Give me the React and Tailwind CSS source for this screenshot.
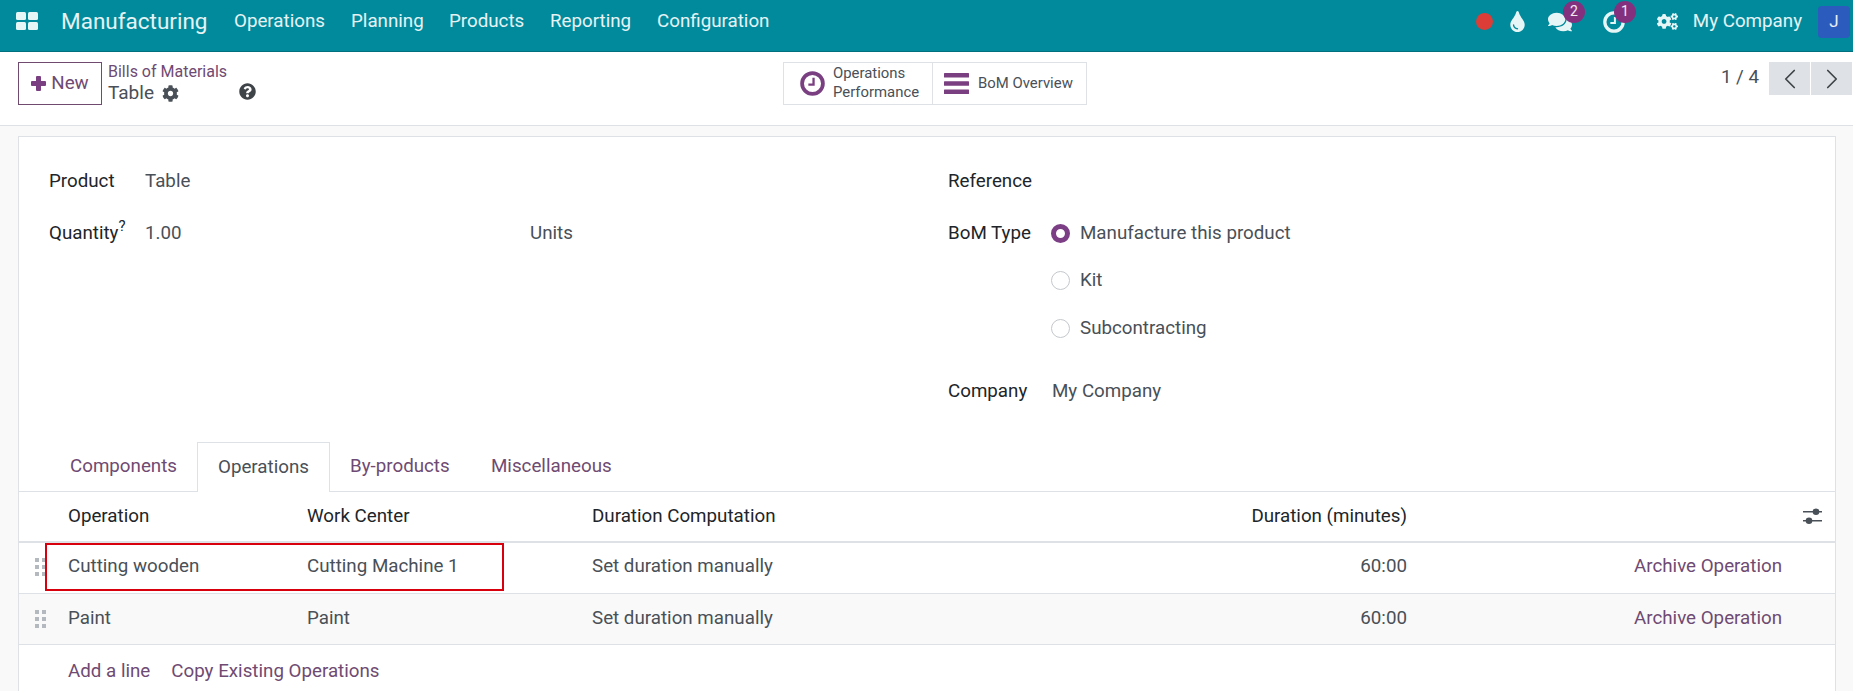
import React from 'react';
import { FaCog, FaQuestionCircle, FaTint, FaComments, FaCogs } from 'react-icons/fa';
import { ChevronLeft, ChevronRight } from 'lucide-react';

const menus = [
  { label: 'Operations', className: 'w-[117px]' },
  { label: 'Planning', className: 'w-[98px]' },
  { label: 'Products', className: 'w-[101px]' },
  { label: 'Reporting', className: 'w-[107px]' },
  { label: 'Configuration', className: 'w-[114px]' },
];

const operations = [
  { name: 'Cutting wooden', center: 'Cutting Machine 1', rowClass: 'pb-[3px] bg-white' },
  { name: 'Paint', center: 'Paint', rowClass: 'pb-[1px] bg-[#f9f9f9]' },
];

const tableCols = 'grid grid-cols-[49px_239px_285px_410px_405px_375px_53px] items-center';

function AppsIcon() {
  return (
    <svg width="22" height="18" viewBox="0 0 22 18" fill="currentColor">
      <rect x="0" y="0" width="10" height="8" rx="1.5" />
      <rect x="12" y="0" width="10" height="8" rx="1.5" />
      <rect x="0" y="10" width="10" height="8" rx="1.5" />
      <rect x="12" y="10" width="10" height="8" rx="1.5" />
    </svg>
  );
}

function PlusIcon() {
  return (
    <svg width="15" height="15" viewBox="0 0 15 15" fill="#7a3f80">
      <rect x="5" y="0" width="5" height="15" rx="1" />
      <rect x="0" y="5" width="15" height="5" rx="1" />
    </svg>
  );
}

function ClockIcon({ size }) {
  return (
    <svg width={size} height={size} viewBox="0 0 24 24" fill="none" stroke="currentColor">
      <circle cx="12" cy="12" r="10" strokeWidth="3.6" />
      <path d="M13 6.5V13H8" strokeWidth="2.2" />
    </svg>
  );
}

function BarsIcon() {
  return (
    <svg width="25" height="21" viewBox="0 0 25 21" fill="currentColor">
      <rect x="0" y="0" width="25" height="4.5" rx="0.5" />
      <rect x="0" y="8.2" width="25" height="4.5" rx="0.5" />
      <rect x="0" y="16.5" width="25" height="4.5" rx="0.5" />
    </svg>
  );
}

function DragHandle() {
  return (
    <svg width="11" height="18" viewBox="0 0 11 18" fill="#b4b9bf">
      <rect x="0" y="0" width="4" height="4" />
      <rect x="7" y="0" width="4" height="4" />
      <rect x="0" y="7" width="4" height="4" />
      <rect x="7" y="7" width="4" height="4" />
      <rect x="0" y="14" width="4" height="4" />
      <rect x="7" y="14" width="4" height="4" />
    </svg>
  );
}

function SlidersIcon() {
  return (
    <svg width="19" height="17" viewBox="0 0 19 17" fill="#495057">
      <rect x="0" y="3" width="19" height="1.5" />
      <rect x="0" y="12" width="19" height="1.5" />
      <circle cx="13" cy="3.7" r="3.3" />
      <circle cx="6" cy="12.7" r="3.3" />
    </svg>
  );
}

function Radio({ checked, label }) {
  return (
    <div className="flex items-center h-[34px] ml-[-1px] text-[#495057]">
      {checked ? (
        <span className="w-[19px] h-[19px] rounded-full border-[5px] border-[#7c3f86] bg-white" />
      ) : (
        <span className="w-[19px] h-[19px] rounded-full border border-[#c4c8cc] bg-white" />
      )}
      <span className="ml-[10px]">{label}</span>
    </div>
  );
}

function Badge({ children, className }) {
  return (
    <span className={`absolute flex items-center justify-center w-[22px] h-[22px] rounded-full bg-[#83317f] text-white/90 text-[14px] ${className}`}>
      {children}
    </span>
  );
}

export default function App() {
  return (
    <div className="h-screen overflow-hidden flex flex-col bg-[#f9f9f9] font-['Roboto',sans-serif] text-[18.75px] text-[#495057]">
      <nav className="h-[52px] shrink-0 flex items-center pb-[8px] bg-[#008a9b] border-b border-[#00707e] text-white/90">
        <div className="ml-4 mb-[1px] text-[#e6f5f6]">
          <AppsIcon />
        </div>
        <span className="ml-[23px] w-[173px] text-[22.5px]">Manufacturing</span>
        <div className="flex">
          {menus.map((m) => (
            <span key={m.label} className={m.className}>{m.label}</span>
          ))}
        </div>
        <div className="ml-auto flex items-center">
          <span className="w-[17px] h-[17px] rounded-full bg-[#dc3d36]" />
          <FaTint className="ml-[14px] text-[21px] text-[#e6f5f6]" />
          <div className="relative ml-[20px] w-[26px]">
            <FaComments className="text-[24px] text-[#e6f5f6]" />
            <Badge className="-top-[9px] left-[15px]">2</Badge>
          </div>
          <div className="relative ml-[29px] w-[22px] text-[#e6f5f6]">
            <ClockIcon size={22} />
            <Badge className="-top-[10px] left-[11px]">1</Badge>
          </div>
          <FaCogs className="ml-[32px] text-[21px] text-[#e6f5f6]" />
          <span className="ml-[15px]">My Company</span>
          <span className="ml-[16px] mr-[3px] mt-[1px] w-8 h-8 rounded flex items-center justify-center bg-[#2a5bbd] text-[17px]">J</span>
        </div>
      </nav>

      <div className="h-[74px] shrink-0 flex items-start bg-white border-b border-[#dee2e6] pl-[18px] pt-[10px]">
        <div className="w-[765px] flex items-start">
          <button className="h-[43px] w-[84px] flex items-center justify-center gap-[5px] border border-[#714b6f] text-[#6f4a72]">
            <PlusIcon />
            New
          </button>
          <div className="ml-[6px] flex flex-col">
            <span className="text-[16px] leading-[20px] text-[#6f4a72]">Bills of Materials</span>
            <div className="flex items-center h-[22px]">
              <span className="text-[19px]">Table</span>
              <FaCog className="ml-[8px] text-[17px]" />
              <FaQuestionCircle className="ml-[60px] mb-[3px] text-[17px] text-[#3f4449]" />
            </div>
          </div>
        </div>
        <div className="h-[43px] w-[304px] flex border border-[#dee2e6] text-[14.9px]">
          <div className="w-[149px] flex items-center border-r border-[#dee2e6] pl-[16px]">
            <span className="text-[#7a3f80]"><ClockIcon size={25} /></span>
            <span className="ml-[8px] pb-[2px] leading-[19px]">Operations<br />Performance</span>
          </div>
          <div className="flex-1 flex items-center pl-[11px]">
            <span className="text-[#7a3f80]"><BarsIcon /></span>
            <span className="ml-[9px]">BoM Overview</span>
          </div>
        </div>
        <div className="flex-1 flex justify-end items-start pr-px">
          <span className="h-[31px] flex items-center mr-[10px]">1 / 4</span>
          <button className="w-[41px] h-[33px] flex items-center justify-center bg-[#dee2e6] text-[#3f4449]">
            <ChevronLeft size={34} strokeWidth={1.2} />
          </button>
          <button className="ml-px w-[41px] h-[33px] flex items-center justify-center bg-[#dee2e6] text-[#3f4449]">
            <ChevronRight size={34} strokeWidth={1.2} />
          </button>
        </div>
      </div>

      <main className="relative mt-[10px] ml-[18px] mr-[17px] flex-1 bg-white border border-[#dee2e6] border-b-0">
        <div className="flex pt-[27px] pl-[30px]">
          <div className="w-[899px]">
            <div className="flex items-center h-[34px]">
              <span className="w-[96px] text-[#212529]">Product</span>
              <span>Table</span>
            </div>
            <div className="flex items-center h-[34px] mt-[18px]">
              <span className="w-[96px] text-[#212529]">Quantity<sup className="text-[15px]">?</sup></span>
              <span className="w-[385px]">1.00</span>
              <span>Units</span>
            </div>
          </div>
          <div>
            <div className="flex items-center h-[34px] text-[#212529]">Reference</div>
            <div className="flex mt-[18px]">
              <span className="w-[104px] h-[34px] flex items-center text-[#212529]">BoM Type</span>
              <div className="flex flex-col">
                <Radio checked label="Manufacture this product" />
                <div className="mt-[13px]"><Radio label="Kit" /></div>
                <div className="mt-[14px]"><Radio label="Subcontracting" /></div>
              </div>
            </div>
            <div className="flex items-center h-[34px] mt-[29px]">
              <span className="w-[104px] text-[#212529]">Company</span>
              <span>My Company</span>
            </div>
          </div>
        </div>

        <div className="mt-[34px] h-[50px] flex border-b border-[#dee2e6] pl-[30px] text-[#6f4a72]">
          <span className="h-[49px] w-[148px] flex items-center pl-[21px] pb-px">Components</span>
          <span className="h-[50px] w-[133px] flex items-center justify-center pb-px bg-white border border-b-0 border-[#dee2e6] text-[#495057]">Operations</span>
          <span className="h-[49px] w-[161px] flex items-center pl-[20px] pb-px">By-products</span>
          <span className="h-[49px] flex items-center pb-px">Miscellaneous</span>
        </div>

        <div className={`${tableCols} h-[51px] pb-px border-b-2 border-[#dee2e6] text-[#212529]`}>
          <span />
          <span>Operation</span>
          <span>Work Center</span>
          <span>Duration Computation</span>
          <span className="text-right">Duration (minutes)</span>
          <span />
          <span className="flex pl-[21px]"><SlidersIcon /></span>
        </div>
        {operations.map((op) => (
          <div key={op.name} className={`${tableCols} h-[51px] border-b border-[#dee2e6] ${op.rowClass}`}>
            <span className="flex pl-[16px]"><DragHandle /></span>
            <span>{op.name}</span>
            <span>{op.center}</span>
            <span>Set duration manually</span>
            <span className="text-right">60:00</span>
            <span className="text-right text-[#6f4a72]">Archive Operation</span>
            <span />
          </div>
        ))}
        <div className="h-[50px] pt-[2px] flex items-center pl-[49px] gap-[21px] text-[#6f4a72]">
          <span>Add a line</span>
          <span>Copy Existing Operations</span>
        </div>

        {/* annotation box drawn over the first row */}
        <div className="absolute left-[26px] top-[406px] w-[459px] h-[48px] border-[2px] border-[#d9000d]" />
      </main>
    </div>
  );
}
